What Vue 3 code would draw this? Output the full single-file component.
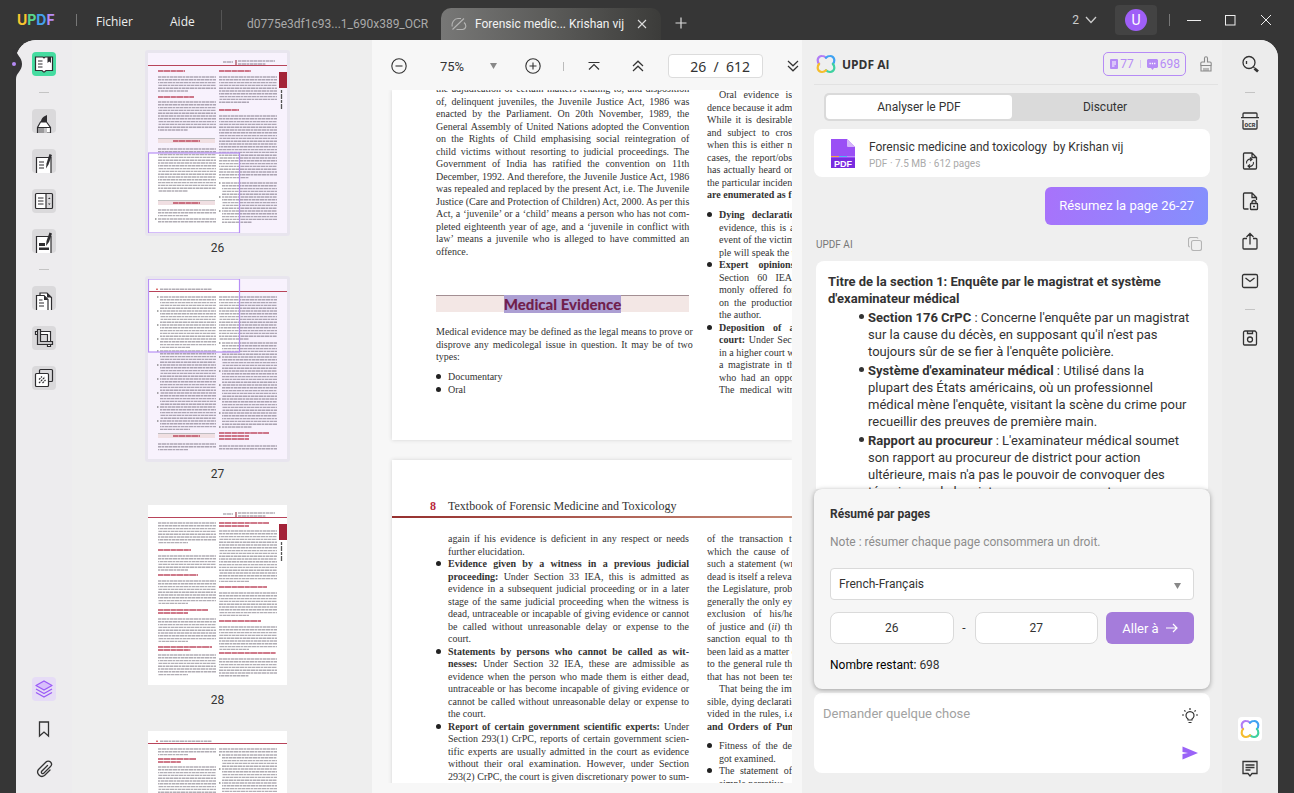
<script setup>
import { ref } from 'vue'

const zoomLevel = ref('75%')
const pageField = ref('26  /  612')
const fromPage = ref('26')
const toPage = ref('27')
const language = ref('French-Français')
const question = ref('')

// Line syntax: "* " bullet, "> " hanging indent, trailing "|" ends a paragraph, <b>/<i> for emphasis.
function parse(lines) {
  return lines.map((raw) => {
    const bullet = raw.startsWith('* ')
    const indent = bullet || raw.startsWith('> ')
    const end = raw.endsWith('|')
    let text = indent ? raw.slice(2) : raw
    if (end) text = text.slice(0, -1)
    return { bullet, indent, end, parts: text.split(/(<[bi]>.*?<\/[bi]>)/).filter(Boolean).map((p) => {
      const m = p.match(/^<([bi])>(.*)<\/[bi]>$/)
      return m ? { tag: m[1], text: m[2] } : { tag: 'span', text: p }
    }) }
  })
}

const p26Left = parse([
  'the adjudication of certain matters relating to, and disposition',
  'of, delinquent juveniles, the Juvenile Justice Act, 1986 was',
  'enacted by the Parliament. On 20th November, 1989, the',
  'General Assembly of United Nations adopted the Convention',
  'on the Rights of Child emphasising social reintegration of',
  'child victims without resorting to judicial proceedings. The',
  'Government of India has ratified the convention on 11th',
  'December, 1992. And therefore, the Juvenile Justice Act, 1986',
  'was repealed and replaced by the present Act, i.e. The Juvenile',
  'Justice (Care and Protection of Children) Act, 2000. As per this',
  'Act, a ‘juvenile’ or a ‘child’ means a person who has not com-',
  'pleted eighteenth year of age, and a ‘juvenile in conflict with',
  'law’ means a juvenile who is alleged to have committed an',
  'offence.|',
])
const p26Evidence = parse([
  'Medical evidence may be defined as the legal means to prove or',
  'disprove any medicolegal issue in question. It may be of two',
  'types:|',
])
const p26Types = parse(['* Documentary|', '* Oral|'])
const p26Right = parse([
  '> Oral evidence is',
  'dence because it adm',
  'While it is desirable',
  'and subject to cros',
  'when this is either n',
  'cases, the report/obs',
  'has actually heard or',
  'the particular inciden',
  '<b>are enumerated as f</b>|',
])
const p26Bullets = parse([
  '* <b>Dying declaratio</b>',
  '> evidence, this is a',
  '> event of the victim',
  '> ple will speak the t',
  '* <b>Expert opinions</b>',
  '> Section 60 IEA,',
  '> monly offered for',
  '> on the production',
  '> the author.|',
  '* <b>Deposition of a</b>',
  '> <b>court:</b> Under Sect',
  '> in a higher court w',
  '> a magistrate in th',
  '> who had an oppo',
  '> The medical witn',
])
const p27Left = parse([
  '> again if his evidence is deficient in any respect or needs',
  '> further elucidation.|',
  '* <b>Evidence given by a witness in a previous judicial</b>',
  '> <b>proceeding:</b> Under Section 33 IEA, this is admitted as',
  '> evidence in a subsequent judicial proceeding or in a later',
  '> stage of the same judicial proceeding when the witness is',
  '> dead, untraceable or incapable of giving evidence or cannot',
  '> be called without unreasonable delay or expense to the',
  '> court.|',
  '* <b>Statements by persons who cannot be called as wit-</b>',
  '> <b>nesses:</b> Under Section 32 IEA, these are admissible as',
  '> evidence when the person who made them is either dead,',
  '> untraceable or has become incapable of giving evidence or',
  '> cannot be called without unreasonable delay or expense to',
  '> the court.|',
  '* <b>Report of certain government scientific experts:</b> Under',
  '> Section 293(1) CrPC, reports of certain government scien-',
  '> tific experts are usually admitted in the court as evidence',
  '> without their oral examination. However, under Section',
  '> 293(2) CrPC, the court is given discretionary power to sum-',
])
const p27Right = parse([
  'of the transaction th',
  'which the cause of t',
  'such a statement (wri',
  'dead is itself a relevan',
  'the Legislature, proba',
  'generally the only eye',
  'exclusion of his/her',
  'of justice and (<i>ii</i>) the',
  'sanction equal to the',
  'been laid as a matter o',
  'to the general rule tha',
  'that has not been test',
  '> That being the imp',
  'sible, dying declaratio',
  'vided in the rules, i.e.',
  '<b>and Orders of Punj</b>',
])
const p27Bullets = parse([
  '* Fitness of the de',
  '> got examined.|',
  '* The statement of',
  '> simple narrative.|',
])

// Miniature pages: blocks are [kind, column x, top, line count, width]
const thumbs = [
  { n: 26, label: '26', selected: true, head: 'right', view: [0, 100, 91, 80], tab: true, blocks: [
    ['h', 10, 18, 1, 27], ['t', 10, 23, 6], ['h', 10, 44, 1, 36], ['t', 10, 48, 11],
    ['s', 10, 88, 1, 58], ['t', 10, 95, 16], ['s', 10, 150, 1, 58], ['t', 10, 156, 3], ['d', 10, 165, 2],
    ['h', 71, 18, 1, 32], ['t', 71, 23, 10], ['h', 71, 57, 1, 20], ['t', 71, 62, 23], ['d', 74, 129, 15]] },
  { n: 27, label: '27', selected: true, head: 'left', view: [0, 0, 91, 73], tab: false, blocks: [
    ['d', 12, 17, 19], ['d', 12, 71, 29], ['s', 10, 157, 1, 58], ['t', 10, 164, 3],
    ['t', 71, 17, 16], ['d', 74, 63, 31], ['h', 71, 154, 3, 50], ['t', 71, 166, 2]] },
  { n: 28, label: '28', selected: false, head: 'right', tab: true, blocks: [
    ['t', 10, 17, 8], ['h', 10, 45, 1, 33], ['t', 10, 50, 6], ['h', 10, 70, 1, 40], ['t', 10, 75, 9],
    ['h', 10, 105, 2, 50], ['t', 10, 113, 9], ['h', 10, 142, 2, 54], ['t', 10, 149, 8],
    ['h', 71, 18, 2, 50], ['t', 71, 25, 19], ['h', 71, 82, 1, 48], ['t', 71, 87, 9],
    ['h', 71, 116, 1, 42], ['t', 71, 121, 9], ['h', 71, 148, 1, 57], ['t', 71, 153, 7]] },
  { n: 29, label: '', selected: false, head: 'left', tab: false, blocks: [
    ['t', 10, 17, 3], ['h', 10, 28, 2, 38], ['t', 10, 35, 40], ['t', 71, 17, 2], ['d', 74, 23, 44]] },
]
function rows(block) {
  const [kind, x, y, count, w] = block
  const step = kind === 'h' ? 3 : 2.8
  return Array.from({ length: count }, (_, i) => ({
    kind, x, y: y + i * step, i,
    x2: w ? x + (i ? w * 0.6 : w) : i === count - 1 && count > 2 ? x + 30 : x < 13 ? 68 : 129,
  }))
}
</script>

<template>
  <div class="app">
    <header class="titlebar">
      <span class="logo"><span class="c1">U</span><span class="c2">P</span><span class="c3">D</span><span class="c4">F</span></span>
      <i class="sep"></i>
      <nav class="menu">
        <button>Fichier</button>
        <button>Aide</button>
      </nav>
      <i class="sep tall"></i>
      <button class="tab">d0775e3df1c93...1_690x389_OCR</button>
      <div class="tab active">
        <svg width="16" height="14" viewBox="0 0 16 14" fill="none" stroke="#b5b5b4" stroke-width="1.1"><path d="M1.500 12.500 13 1.500M1.300 9.500C.3 6 3 1.500 7 1.500h3M5.500 12.500h6C15 12.500 16 8 13 5.500"/></svg>
        <button class="tabname">Forensic medic... Krishan vij</button>
        <button class="ico" aria-label="Fermer l’onglet"><svg width="10" height="10" viewBox="0 0 10 10" stroke="#ddd" stroke-width="1.100"><path d="M1 1l8 8M9 1L1 9"/></svg></button>
      </div>
      <button class="ico plus" aria-label="Nouvel onglet"><svg width="12" height="12" viewBox="0 0 12 12" stroke="#ddd" stroke-width="1.2"><path d="M6 .5v11M.5 6h11"/></svg></button>
      <div class="window">
        <button class="count">2 <svg width="12" height="8" viewBox="0 0 12 8" fill="none" stroke="#ccc" stroke-width="1.300"><path d="M1 1l5 5.500L11 1"/></svg></button>
        <button class="avatar"><span>U</span></button>
        <i class="sep"></i>
        <button class="ico win" aria-label="Réduire"><svg width="14" height="12" viewBox="0 0 14 12" stroke="#eee"><path d="M0 6.500h14"/></svg></button>
        <button class="ico win" aria-label="Agrandir"><svg width="11" height="12" viewBox="0 0 11 12" fill="none" stroke="#eee"><rect x=".5" y="1.500" width="9.500" height="9.500"/></svg></button>
        <button class="ico win" aria-label="Fermer"><svg width="12" height="12" viewBox="0 0 12 12" stroke="#eee"><path d="M1 1l10 10M11 1L1 11"/></svg></button>
      </div>
    </header>

    <main class="body">
      <svg class="notch" width="20" height="30" viewBox="0 0 20 30"><path d="M4 0C4 6 10 8 10 15S4 24 4 30H0V0z" fill="#353436"/><circle cx="2" cy="15" r="2" fill="#b58af5"/></svg>

      <aside class="rail left">
        <button class="tile on" aria-label="Lecture"><svg viewBox="0 0 24 24"><path d="M3.500 5H11l1 1 1-1h7.500v13.500H14l-1.500 1.500h-1L10 18.500H3.500z" fill="#fff" stroke="#2e2d30" stroke-width="1.200"/><path d="M15.500 5h3.500v6l-1.800-1.500L15.500 11z" fill="#2e2d30"/><path d="M6 9h4.500M6 12h4.500M6 15h4.500" stroke="#2e2d30" stroke-width="1.200"/></svg></button>
        <hr>
        <button class="tile" aria-label="Commentaire"><svg viewBox="0 0 24 24"><path d="M8.500 13c1-2 1-4 3.500-5.500L15 6v7z" fill="#2e2d30"/><path d="M8.500 13h6l4 5.500V24h-13v-5.500z" fill="#fff" stroke="#2e2d30" stroke-width="1.200"/><path d="M6 19h6v5H6z" fill="#9b9a9c"/><path d="M12 19h3v5h-3z" fill="#c4c3c5"/><path d="M5.500 18.500h13" stroke="#2e2d30"/></svg></button>
        <button class="tile" aria-label="Modifier"><svg viewBox="0 0 24 24"><path d="M4.500 25V8.500h14.500V25z" fill="#fff" stroke="#2e2d30" stroke-width="1.200"/><path d="M7 13h5M7 16h5M7 19h5" stroke="#2e2d30" stroke-width="1.200"/><path d="M17.500 5l2.500 1-3.500 9.500-2.500 4 .500-5z" fill="#2e2d30"/></svg></button>
        <button class="tile" aria-label="Formulaire"><svg viewBox="0 0 24 24"><path d="M3.500 4.500H14v15H3.500z" fill="#fff"/><path d="M14 4.500h6.500v15H14z" fill="#d9d8da"/><rect x="3.500" y="4.500" width="17" height="15" rx="1" fill="none" stroke="#2e2d30" stroke-width="1.200"/><path d="M14 4.500v15M6 9h5.500M6 12h5.500M6 15h5.500" stroke="#2e2d30" stroke-width="1.200"/><path d="M16 10l1.300-1.500L18.600 10zM16 14.500l1.300 1.500 1.300-1.500z" fill="#2e2d30"/></svg></button>
        <button class="tile" aria-label="Caviarder"><svg viewBox="0 0 24 24"><path d="M4.500 25V7.500h14.500V25z" fill="#fff" stroke="#2e2d30" stroke-width="1.200"/><path d="M7 14h6v3H7zM7 18.500h10v2.500H7z" fill="#2e2d30"/><path d="M17.500 3.500l2.500 1-3 8.500-3 4 .500-5z" fill="#2e2d30"/></svg></button>
        <hr>
        <button class="tile" aria-label="Organiser"><svg viewBox="0 0 24 24"><path d="M8 21V7h7l4.500 4.500V25H8z" fill="#fff" stroke="#2e2d30" stroke-width="1.200"/><path d="M4.500 25V9.500H12l4 4V25z" fill="#fff" stroke="#2e2d30" stroke-width="1.200"/><path d="M12 9.500v4.500h4zM15 7v4.500h4.500z" fill="#2e2d30"/><path d="M7 14h3.500M7 17h5M7 20h5" stroke="#2e2d30" stroke-width="1.200"/></svg></button>
        <button class="tile" aria-label="Rogner"><svg viewBox="0 0 24 24" fill="#fff" stroke="#2e2d30" stroke-width="1.200"><path d="M3.500 5.500H18.500v15h-3v-12h-12z"/><path d="M5.500 3.500h3v12H20.500v3H5.500z" fill="#c9c8ca"/></svg></button>
        <button class="tile" aria-label="Filigrane"><svg viewBox="0 0 24 24"><rect x="7.500" y="3.500" width="13" height="12" rx="1" fill="#d9d8da" stroke="#2e2d30" stroke-width="1.200"/><rect x="3.500" y="7.500" width="13" height="13" rx="1" fill="#fff" stroke="#2e2d30" stroke-width="1.200"/><path d="M7 13.500l3-3M7 17l6-6M10.500 17l3-3" stroke="#2e2d30" stroke-width="1.200" stroke-dasharray="2 .8"/></svg></button>
        <span class="grow"></span>
        <button class="tile flat lilac" aria-label="Vignettes"><svg viewBox="0 0 24 24" fill="none" stroke="#9b5cf6" stroke-width="1.400" stroke-linejoin="round"><path d="M12 4l8 4.500-8 4.500-8-4.500z" fill="#d8bffb"/><path d="M4 12l8 4.500 8-4.500M4 15.500L12 20l8-4.500"/></svg></button>
        <button class="tile flat" aria-label="Signets"><svg viewBox="0 0 24 24" fill="none" stroke="#333" stroke-width="1.300"><path d="M7.500 5h9v14l-4.500-4-4.500 4z"/></svg></button>
        <button class="tile flat" aria-label="Pièces jointes"><svg viewBox="0 0 24 24" fill="none" stroke="#333" stroke-width="1.300" stroke-linecap="round"><path d="M15.500 8.500L9.500 14.500a1.500 1.500 0 0 0 2 2L18.500 9.500a3 3 0 0 0-4.500-4.500L6.500 12.500a4.300 4.300 0 0 0 6 6l5.500-5.500"/></svg></button>
      </aside>

      <section class="thumbs">
        <figure v-for="t in thumbs" :key="t.n">
          <div class="sheet" :class="{ selected: t.selected }">
            <svg width="139" height="180" viewBox="0 0 139 180">
              <rect width="139" height="180" :fill="t.selected ? '#f8f2fd' : '#fff'"/>
              <rect v-if="t.view" :x="t.view[0]" :y="t.view[1]" :width="t.view[2]" :height="t.view[3]" fill="#fff"/>
              <rect y="12" width="139" height="1" fill="#b8445a"/>
              <template v-if="t.head === 'right'">
                <path d="M75 9h10" class="tx"/><path d="M88 7v5" stroke="#8c2334"/><path d="M90 8h37M90 11h28" class="tx"/>
              </template>
              <template v-else>
                <path d="M8 10.200h2" stroke="#c33"/><path d="M12 10.200h52" class="tx"/>
              </template>
              <template v-if="t.tab">
                <rect x="131" y="19" width="8" height="16" fill="#a32238"/>
                <path d="M133.500 37v20" stroke="#555" stroke-width="1.300" stroke-dasharray="3 1 5 1"/>
              </template>
              <template v-for="(b, bi) in t.blocks" :key="bi">
                <g v-for="r in rows(b)" :key="r.i">
                  <path v-if="r.kind === 'd' && r.i % 5 === 0" :d="`M${r.x - 3} ${r.y + 1}h1.500`" stroke="#555" stroke-width="1.200"/>
                  <template v-if="r.kind === 's'">
                    <rect :x="r.x" :y="r.y - 2" width="57" height="4" fill="#f0dfe2"/>
                    <path :d="`M${r.x} ${r.y - 2.500}h57`" stroke="#999" stroke-width=".6"/>
                    <path :d="`M${r.x + 15} ${r.y}h27`" class="hd"/>
                  </template>
                  <path v-else-if="r.kind === 'h'" :d="`M${r.x} ${r.y}H${r.x2}`" class="hd"/>
                  <path v-else :d="`M${r.x} ${r.y + 1}H${r.x2}`" class="tx" :stroke-dashoffset="r.i * 5"/>
                </g>
              </template>
              <rect v-if="t.view" :x="t.view[0] + .5" :y="t.view[1]" :width="t.view[2]" :height="t.view[3]" fill="none" stroke="#b78ff5" stroke-width="1.200"/>
            </svg>
          </div>
          <figcaption>{{ t.label }}</figcaption>
        </figure>
      </section>

      <section class="doc">
        <div class="tools">
          <button class="ico w40" aria-label="Zoom arrière"><svg width="16" height="16" viewBox="0 0 16 16" fill="none" stroke="#333" stroke-width="1.100"><circle cx="8" cy="8" r="7.200"/><path d="M4.500 8h7"/></svg></button>
          <label class="zoom"><input v-model="zoomLevel" aria-label="Zoom"><svg width="7" height="6" viewBox="0 0 7 6"><path d="M0 0h7L3.500 6z" fill="#888"/></svg></label>
          <button class="ico w40" aria-label="Zoom avant"><svg width="16" height="16" viewBox="0 0 16 16" fill="none" stroke="#333" stroke-width="1.100"><circle cx="8" cy="8" r="7.200"/><path d="M4.500 8h7M8 4.500v7"/></svg></button>
          <i class="bar"></i>
          <button class="ico w44" aria-label="Première page"><svg width="12" height="10" viewBox="0 0 12 10" fill="none" stroke="#333" stroke-width="1.200"><path d="M.5 1.500h11M1 8.500l5-5 5 5"/></svg></button>
          <button class="ico w44" aria-label="Page précédente"><svg width="12" height="12" viewBox="0 0 12 12" fill="none" stroke="#333" stroke-width="1.200"><path d="M1 6l5-4.800L11 6M1 11l5-4.800 5 4.800"/></svg></button>
          <input v-model="pageField" class="pagefield" aria-label="Page">
          <button class="ico last" aria-label="Page suivante"><svg width="12" height="12" viewBox="0 0 12 12" fill="none" stroke="#333" stroke-width="1.200"><path d="M1 1l5 4.800L11 1M1 6l5 4.800L11 6"/></svg></button>
        </div>
        <div class="viewport">
          <article class="page first">
            <div class="col main">
              <div class="lines"><p v-for="(l, i) in p26Left" :key="i" :class="l"><component :is="s.tag" v-for="(s, j) in l.parts" :key="j">{{ s.text }}</component></p></div>
              <h2><mark>Medical Evidence</mark></h2>
              <div class="lines"><p v-for="(l, i) in p26Evidence" :key="i" :class="l"><component :is="s.tag" v-for="(s, j) in l.parts" :key="j">{{ s.text }}</component></p></div>
              <div class="lines spaced"><p v-for="(l, i) in p26Types" :key="i" :class="l"><component :is="s.tag" v-for="(s, j) in l.parts" :key="j">{{ s.text }}</component></p></div>
            </div>
            <div class="col side">
              <div class="lines"><p v-for="(l, i) in p26Right" :key="i" :class="l"><component :is="s.tag" v-for="(s, j) in l.parts" :key="j">{{ s.text }}</component></p></div>
              <div class="lines spaced"><p v-for="(l, i) in p26Bullets" :key="i" :class="l"><component :is="s.tag" v-for="(s, j) in l.parts" :key="j">{{ s.text }}</component></p></div>
            </div>
          </article>
          <article class="page second">
            <header><b>8</b><span>Textbook of Forensic Medicine and Toxicology</span></header>
            <div class="rule"></div>
            <div class="cols">
              <div class="col main">
                <div class="lines"><p v-for="(l, i) in p27Left" :key="i" :class="l"><component :is="s.tag" v-for="(s, j) in l.parts" :key="j">{{ s.text }}</component></p></div>
              </div>
              <div class="col side">
                <div class="lines"><p v-for="(l, i) in p27Right" :key="i" :class="l"><component :is="s.tag" v-for="(s, j) in l.parts" :key="j">{{ s.text }}</component></p></div>
                <div class="lines spaced"><p v-for="(l, i) in p27Bullets" :key="i" :class="l"><component :is="s.tag" v-for="(s, j) in l.parts" :key="j">{{ s.text }}</component></p></div>
              </div>
            </div>
          </article>
        </div>
      </section>

      <section class="ai">
        <header class="aihead">
          <svg width="20" height="20" viewBox="0 0 18 18" fill="none" stroke-width="2" stroke-linecap="round"><path d="M2.800 9C1.500 8 1.500 6.800 1.500 5.500A3.800 3.800 0 0 1 5.500 1.800C7 1.800 8 2.300 9 3.300" stroke="#b27df5"/><path d="M9 3.300c1-1 2-1.500 3.500-1.500a3.800 3.800 0 0 1 4 3.700c0 1.300 0 2.500-1.300 3.500" stroke="#3fa2f2"/><path d="M15.200 9c1.300 1 1.300 2.200 1.300 3.500a3.800 3.800 0 0 1-4 3.700c-1.500 0-2.500-.500-3.500-1.500" stroke="#3fd1a0"/><path d="M9 14.700c-1 1-2 1.500-3.500 1.500a3.800 3.800 0 0 1-4-3.700C1.500 11.200 1.500 10 2.800 9" stroke="#f5bd2e"/></svg>
          <strong>UPDF AI</strong>
          <span class="grow"></span>
          <div class="quota">
            <svg width="8" height="10" viewBox="0 0 8 10"><rect width="8" height="10" rx="1" fill="#b68bf6"/><path d="M2 3h4M2 5h4M2 7h2.500" stroke="#fff"/></svg><span>77</span><i></i>
            <svg width="11" height="11" viewBox="0 0 11 11"><path d="M1 0h9l1 1v7l-1 1H7L5.500 11 4 9H1L0 8V1z" fill="#b68bf6"/><path d="M2.500 4.500h6" stroke="#fff" stroke-width="1.300" stroke-dasharray="1.300 1"/></svg><span>698</span>
          </div>
          <button class="ico" aria-label="Effacer"><svg width="12" height="16" viewBox="0 0 12 16" fill="none" stroke="#8a8a8a" stroke-width="1.100"><path d="M4.500 6V2.300a1.500 1.500 0 0 1 3 0V6H10a1.200 1.200 0 0 1 1.200 1.200V9.500H.8V7.200A1.200 1.200 0 0 1 2 6zM1 9.500V15h10V9.500M4 15v-3M6 15v-3M8 15v-3"/></svg></button>
        </header>
        <div class="switch"><button class="on">Analyser le PDF</button><button>Discuter</button></div>
        <div class="file">
          <svg width="26" height="31" viewBox="0 0 26 31"><path d="M1 1h16l8 8v21H1z" fill="#9a4ff5"/><path d="M17 1l8 8h-7a1 1 0 0 1-1-1z" fill="#d5b4fb"/><path d="M1 18h24v1H1z" fill="#f2a34a"/><path d="M9 18h8v1H9z" fill="#4fb4f5"/><path d="M17 18h8v1h-8z" fill="#b98bf7"/><path d="M1 20h24v10H1z" fill="#7a2be0"/><text x="13" y="28.500" text-anchor="middle" class="pdf">PDF</text></svg>
          <div class="fileinfo"><div class="name">Forensic medicine and toxicology&nbsp; by Krishan vij</div><div class="meta">PDF · 7.5 MB · 612 pages</div></div>
        </div>
        <div class="ask-bubble">Résumez la page 26-27</div>
        <div class="from"><span>UPDF AI</span><button class="ico" aria-label="Copier"><svg width="14" height="14" viewBox="0 0 14 14" fill="none" stroke="#b4b4b4" stroke-width="1.100"><rect x="3.500" y="3.500" width="10" height="10" rx="2"/><path d="M1.800 10C.9 9.800.5 9 .5 8.300V2.500a2 2 0 0 1 2-2h6c.8 0 1.300.400 1.500 1"/></svg></button></div>
        <div class="answer">
          <h3>Titre de la section 1: Enquête par le magistrat et système<br>d'examinateur médical</h3>
          <ul>
            <li><b>Section 176 CrPC</b> : Concerne l'enquête par un magistrat<br>sur la cause du décès, en supposant qu'il n'est pas<br>toujours sûr de se fier à l'enquête policière.</li>
            <li><b>Système d'examinateur médical</b> : Utilisé dans la<br>plupart des États américains, où un professionnel<br>médical mène l'enquête, visitant la scène du crime pour<br>recueillir des preuves de première main.</li>
            <li><b>Rapport au procureur</b> : L'examinateur médical soumet<br>son rapport au procureur de district pour action<br>ultérieure, mais n'a pas le pouvoir de convoquer des<br>témoins ou de la rejeter ou non au parquet.</li>
          </ul>
        </div>
        <form class="summary" @submit.prevent>
          <h4>Résumé par pages</h4>
          <p>Note : résumer chaque page consommera un droit.</p>
          <div class="select"><select v-model="language" aria-label="Langue"><option>French-Français</option></select><svg width="7" height="6" viewBox="0 0 7 6"><path d="M0 0h7L3.500 6z" fill="#888"/></svg></div>
          <div class="range">
            <input v-model="fromPage" aria-label="De la page"><span>-</span><input v-model="toPage" aria-label="À la page">
            <button>Aller à <svg width="12" height="10" viewBox="0 0 12 10" fill="none" stroke="#fff" stroke-width="1.200"><path d="M0 5h11M7 1l4 4-4 4"/></svg></button>
          </div>
          <div class="left-count">Nombre restant: <span>698</span></div>
        </form>
        <div class="prompt">
          <textarea v-model="question" placeholder="Demander quelque chose" aria-label="Question"></textarea>
          <div class="actions">
            <button class="ico" aria-label="Suggestions"><svg width="16" height="16" viewBox="0 0 16 16" fill="none" stroke="#333" stroke-width="1.200"><path d="M6 12V11A4 4 0 1 1 10 11v1zM6.500 14.500h3M8 0v2M2.300 2.300l1.200 1.200M13.700 2.300l-1.200 1.200M0 7h2M14 7h2"/></svg></button>
            <button class="ico" aria-label="Envoyer"><svg width="16" height="14" viewBox="0 0 16 14"><path d="M.5.5L16 7 .5 13.500V8L6 7 .5 6z" fill="#9a63f7"/></svg></button>
          </div>
        </div>
      </section>

      <aside class="rail right">
        <button class="tile flat" aria-label="Rechercher"><svg viewBox="0 0 24 24" fill="none" stroke="#333" stroke-width="1.300"><circle cx="11" cy="10.500" r="6"/><path d="M8.500 9v3"/><path d="M15.500 15l1 1" /><path d="M16.500 16.500l3.500 3" stroke-width="2.800"/></svg></button>
        <hr>
        <button class="tile flat" aria-label="OCR"><svg viewBox="0 0 24 24" fill="none" stroke="#333" stroke-width="1.300"><path d="M5 8V5a1 1 0 0 1 1-1h12a1 1 0 0 1 1 1v3M3 8.700h18M5 11v8a1 1 0 0 0 1 1h12a1 1 0 0 0 1-1v-8"/><text x="12" y="17.500" text-anchor="middle" class="ocr">OCR</text></svg></button>
        <button class="tile flat" aria-label="Convertir"><svg viewBox="0 0 24 24" fill="none" stroke="#333" stroke-width="1.300"><path d="M14 4H6.500a1 1 0 0 0-1 1v14a1 1 0 0 0 1 1h11a1 1 0 0 0 1-1V8.500zM14 4v4.500h4.500"/><path d="M8.600 14.500a3.500 3.500 0 0 1 4.900-4M15.400 13a3.500 3.500 0 0 1-4.900 4M12 8.500l2 2-2 1.500M12 19l-2-2 2-1.500" stroke-width="1.100"/></svg></button>
        <button class="tile flat" aria-label="Protéger"><svg viewBox="0 0 24 24" fill="none" stroke="#333" stroke-width="1.300"><path d="M10.500 20H6.500a1 1 0 0 1-1-1V5a1 1 0 0 1 1-1H14l4.500 4.500V11M14 4v4.500h4.500"/><rect x="12.500" y="14.500" width="7" height="6" rx=".5"/><path d="M14 14.500v-1a2 2 0 0 1 4 0v1M15 17.500h2"/></svg></button>
        <button class="tile flat" aria-label="Partager"><svg viewBox="0 0 24 24" fill="none" stroke="#333" stroke-width="1.300"><path d="M9 9.500H6a1 1 0 0 0-1 1V19a1 1 0 0 0 1 1h12a1 1 0 0 0 1-1v-8.500a1 1 0 0 0-1-1h-3M12 15.500V4.500M8.500 8L12 4.500 15.500 8"/></svg></button>
        <button class="tile flat" aria-label="Courriel"><svg viewBox="0 0 24 24" fill="none" stroke="#333" stroke-width="1.300"><rect x="4.500" y="5.500" width="15" height="13" rx="1.500"/><path d="M7.500 9l4.500 3.500L16.500 9"/></svg></button>
        <hr>
        <button class="tile flat" aria-label="Enregistrer"><svg viewBox="0 0 24 24" fill="none" stroke="#333" stroke-width="1.300"><path d="M7 5h10l1.500 1.500V18a1 1 0 0 1-1 1h-11a1 1 0 0 1-1-1V6.500A1.500 1.500 0 0 1 7 5zM9.500 5v2.500h5V5"/><circle cx="12" cy="13.500" r="2.500"/></svg></button>
        <span class="grow"></span>
        <button class="tile white" aria-label="UPDF AI"><svg class="small" viewBox="0 0 18 18" fill="none" stroke-width="1.900" stroke-linecap="round"><path d="M2.800 9C1.500 8 1.500 6.800 1.500 5.500A3.800 3.800 0 0 1 5.500 1.800C7 1.800 8 2.300 9 3.300" stroke="#b27df5"/><path d="M9 3.300c1-1 2-1.500 3.500-1.500a3.800 3.800 0 0 1 4 3.700c0 1.300 0 2.500-1.300 3.500" stroke="#3fa2f2"/><path d="M15.200 9c1.300 1 1.300 2.200 1.300 3.500a3.800 3.800 0 0 1-4 3.700c-1.500 0-2.500-.500-3.500-1.500" stroke="#3fd1a0"/><path d="M9 14.700c-1 1-2 1.500-3.500 1.500a3.800 3.800 0 0 1-4-3.700C1.500 11.200 1.500 10 2.800 9" stroke="#f5bd2e"/></svg></button>
        <button class="tile flat" aria-label="Commentaires"><svg viewBox="0 0 24 24" fill="none" stroke="#333" stroke-width="1.300"><path d="M5 4.500h14v12h-5l-2 2.500-2-2.500H5zM7.500 8h9M7.500 10.500h9M7.500 13h5"/></svg></button>
      </aside>
    </main>
  </div>
</template>

<style>
html, body { background: #363636; }
</style>

<style scoped>
.app { height: 100vh; display: flex; flex-direction: column; overflow: hidden; background: #363636; font-family: Roboto, "Open Sans", sans-serif; font-size: 12px; color: #333; }
button { background: none; border: 0; padding: 0; margin: 0; font: inherit; color: inherit; cursor: pointer; white-space: nowrap; }
input, select, textarea { font: inherit; color: inherit; border: 0; padding: 0; margin: 0; outline: 0; background: none; box-sizing: border-box; min-width: 0; }
h2, h3, h4, p, ul, figure { margin: 0; padding: 0; }
svg { flex: none; display: block; }
.grow { flex: 1; }
.ico { display: flex; align-items: center; justify-content: center; }

.titlebar { flex: none; height: 40px; display: flex; align-items: center; color: #eee; }
.logo { width: 40px; margin: 0 19px 0 17px; font: 700 14px/20px Inter, sans-serif; }
.c1 { color: #f8c62f; } .c2 { color: #59d68c; } .c3 { color: #44a2ec; } .c4 { color: #b98bf7; }
.sep { width: 1px; height: 12px; background: #777; }
.sep.tall { height: 20px; background: #555; }
.menu { box-sizing: border-box; width: 144px; display: flex; gap: 37px; padding: 2px 0 0 19px; font: 12px "Open Sans", sans-serif; }
.tab { flex: none; align-self: flex-end; width: 175px; height: 32px; margin-left: 25px; color: #aaa; text-align: left; }
.tab.active { box-sizing: border-box; width: 220px; margin-left: 19px; display: flex; align-items: center; gap: 8px; padding: 0 14px 0 10px; color: #f2f2f2; border-radius: 10px 10px 0 0; background: linear-gradient(90deg, #777776, #5b5b59 50%, #3c3c3a); }
.tabname { flex: 1; text-align: left; }
.plus { margin: 6px 0 0 14px; }
.window { margin-left: auto; display: flex; align-items: center; padding-right: 22px; }
.count { display: flex; align-items: center; gap: 6px; color: #ccc; margin-right: 18px; }
.avatar { width: 42px; height: 30px; border-radius: 4px; background: #434343; display: flex; align-items: center; justify-content: center; margin-right: 12px; }
.avatar span { width: 22px; height: 22px; border-radius: 50%; background: #9f5ff7; color: #fff; font-size: 14px; line-height: 22px; }
.win { margin-left: 24px; }
.sep + .win { margin-left: 17px; }

.body { position: relative; flex: 1; min-height: 0; margin: 0 16px; display: flex; background: #eee; border-radius: 20px 18px 0 0; }
.notch { position: absolute; left: -4px; top: 9px; }
.rail { flex: none; box-sizing: border-box; display: flex; flex-direction: column; align-items: center; gap: 16px; padding: 12px 0; background: #ececec; }
.rail.left { width: 56px; border-radius: 20px 0 0 0; background: #edecee; }
.rail.right { width: 56px; border-radius: 0 18px 0 0; }
.rail hr { width: 10px; height: 1px; border: 0; margin: 0; background: #c4c4c4; }
.tile { width: 24px; height: 24px; border-radius: 4px; background: #dad9db; overflow: hidden; display: flex; align-items: center; justify-content: center; }
.tile svg { width: 24px; height: 24px; }
.tile svg.small { width: 20px; height: 20px; }
.tile.on { background: #45dca0; }
.tile.flat { background: none; }
.tile.lilac { background: #e6dcf6; }
.tile.white { background: #fff; }
.ocr { font: 700 6px "Liberation Mono", monospace; fill: #333; stroke: none; }
.pdf { font: 700 9px "Liberation Sans", sans-serif; fill: #fff; }

.thumbs { flex: none; box-sizing: border-box; width: 300px; height: 100%; padding: 10px 9px 0 0; overflow: hidden; background: #eee; display: flex; flex-direction: column; align-items: center; gap: 16px; }
.thumbs figure { flex: none; height: 210px; text-align: center; }
.sheet { padding: 3px; }
.sheet.selected { background: #e8e5ee; border-radius: 3px; }
.thumbs figcaption { margin-top: 2px; line-height: 20px; }
.tx { stroke: #3d3545; stroke-opacity: 0.4; stroke-width: 1.4; stroke-dasharray: 3 .5 5 .5 2 .6 4 .4; fill: none; }
.hd { stroke: #b5324c; stroke-opacity: 0.65; stroke-width: 2; stroke-dasharray: 5 .4 7 .5; fill: none; }

.doc { flex: 1 1 430px; min-width: 0; background: #f7f7f7; display: flex; flex-direction: column; overflow: hidden; }
.tools { flex: none; box-sizing: border-box; height: 50px; padding: 2px 0 0 7px; display: flex; align-items: center; white-space: nowrap; }
.w40 { width: 40px; flex: none; }
.w44 { width: 44px; flex: none; }
.zoom { width: 77px; margin-left: 21px; margin-right: -4px; flex: none; display: flex; align-items: center; }
.zoom input { width: 50px; font-size: 13px; }
.bar { width: 1px; height: 9px; margin: 0 8px 0 10px; background: #bbb; }
.pagefield { flex: none; width: 95px; height: 24px; margin-left: 8px; padding: 0 12px; border: 1px solid #dcdcdc; border-radius: 4px; background: #fff; font: 14px "Noto Sans", sans-serif; text-align: right; }
.last { margin-left: 24px; }
.viewport { flex: 1; min-height: 0; margin: 0 10px 10px 16px; padding-left: 4px; overflow: hidden; display: flex; flex-direction: column; gap: 20px; color: #333; font: 10px/13px "Liberation Serif", "Times New Roman", serif; }
.page { flex: none; box-sizing: border-box; background: #fff; box-shadow: 0 0 4px #d4d4d4; }
.page.first { height: 350px; padding-left: 44px; display: flex; gap: 18px; }
.page.first .main { margin-top: -8px; }
.page.first .side { margin-top: -2px; }
.page.second header { display: flex; gap: 12px; padding: 38px 0 2px 38px; font-size: 12px; line-height: 16px; }
.page.second header b { color: #b8273d; }
.rule { height: 2px; background: linear-gradient(90deg, #96302f, #c48a76); }
.cols { display: flex; gap: 18px; padding: 14px 0 0 44px; }
.main { flex: none; width: 253px; }
.side { flex: none; width: 85px; }
.lines { display: grid; grid-auto-rows: 13px 12px; }
.lines.spaced { margin-top: 7px; }
.lines p { position: relative; white-space: nowrap; text-align: justify; text-align-last: justify; }
.lines p.indent { padding-left: 12px; }
.lines p.end { text-align-last: left; }
.lines p.bullet::before { content: ""; position: absolute; left: 0; top: 4px; width: 5px; height: 5px; border-radius: 50%; background: #222; }
h2 { height: 16px; margin: 38px 0 13px; border-top: 1px solid #a38f93; background: #f3e7e5; box-sizing: content-box; text-align: center; font: 900 15px/16px Lato, sans-serif; color: #70204c; }
h2 mark { background: #ac9fd3; color: inherit; }

.ai { flex: 0 0 420px; min-width: 0; box-sizing: border-box; padding: 0 12px 20px; display: flex; flex-direction: column; background: #efefef; }
.aihead { flex: none; height: 40px; margin-right: -8px; padding: 4px 6px 0 2px; display: flex; align-items: center; border-bottom: 1px solid #e2e2e2; }
.aihead strong { margin-left: 6px; font-family: "Open Sans", sans-serif; }
.quota { height: 22px; padding: 0 5px 0 6px; display: flex; align-items: center; border: 1px solid #b68bf6; border-radius: 5px; color: #b68bf6; margin-right: 14px; }
.quota span { margin-left: 2px; }
.quota i { width: 1px; height: 8px; margin: 0 6px; background: #d9c6f5; }
.switch { flex: none; margin: 8px 10px 0; padding: 2px; display: flex; border-radius: 5px; background: #dadada; }
.switch button { flex: 1; height: 24px; border-radius: 4px; line-height: 24px; }
.switch .on { background: #fff; }
.file { flex: none; box-sizing: border-box; height: 48px; margin-top: 8px; padding: 0 16px; border-radius: 8px; background: #fff; display: flex; align-items: center; gap: 13px; }
.fileinfo { padding-top: 3px; }
.name { line-height: 18px; }
.meta { line-height: 16px; font-size: 10px; color: #aaa; }
.ask-bubble { flex: none; align-self: flex-end; margin: 10px 2px 0; padding: 0 14px; border-radius: 6px; background: linear-gradient(100deg, #a872fb, #8490fd); color: #fff; font-size: 13px; line-height: 38px; }
.from { flex: none; height: 16px; margin: 11px 8px 9px 2px; display: flex; align-items: center; justify-content: space-between; font-size: 10px; color: #777; }
.answer { flex: 1; min-height: 0; margin: 0 2px; padding: 12px 12px 0; border-radius: 8px 8px 0 0; background: #fff; overflow: hidden; font-size: 13px; line-height: 17px; box-sizing: border-box; white-space: nowrap; }
.answer h3 { font-size: 13px; line-height: 17px; margin-bottom: 2px; }
.answer ul { list-style: none; }
.answer li { position: relative; padding-left: 40px; margin-bottom: 2px; }
.answer li::before { content: ""; position: absolute; left: 31px; top: 5px; width: 5px; height: 5px; border-radius: 50%; background: #333; }
.summary { position: relative; flex: none; box-sizing: border-box; height: 200px; padding: 16px; border-radius: 8px; background: #f6f6f6; box-shadow: 0 1px 5px rgba(0, 0, 0, 0.35); }
.summary h4 { font-size: 12px; line-height: 18px; }
.summary p { margin-top: 10px; line-height: 18px; color: #8d8d8d; }
.select { position: relative; margin-top: 17px; }
.select select { width: 100%; height: 32px; padding: 0 8px; border: 1px solid #dadada; border-radius: 4px; background: #fff; appearance: none; }
.select svg { position: absolute; right: 13px; top: 15px; pointer-events: none; }
.range { margin-top: 12px; display: flex; align-items: center; }
.range input { flex: 1; height: 32px; border: 1px solid #dadada; border-radius: 8px; background: #fff; text-align: center; font-size: 12px; }
.range span { width: 21px; text-align: center; }
.range button { width: 88px; height: 32px; margin-left: 8px; border-radius: 6px; background: #a57cdb; color: #fff; font-size: 13px; display: flex; align-items: center; justify-content: center; gap: 7px; }
.left-count { margin-top: 12px; line-height: 18px; color: #000; }
.left-count span { color: #333; }
.prompt { flex: none; box-sizing: border-box; height: 80px; margin-top: 4px; padding: 12px 12px 12px 9px; border-radius: 8px; background: #fff; display: flex; }
.prompt textarea { flex: 1; resize: none; font-size: 13px; line-height: 18px; }
.prompt textarea::placeholder { color: #a2a2a2; opacity: 1; }
.actions { display: flex; flex-direction: column; justify-content: space-between; padding: 3px 0 1px; }
</style>
